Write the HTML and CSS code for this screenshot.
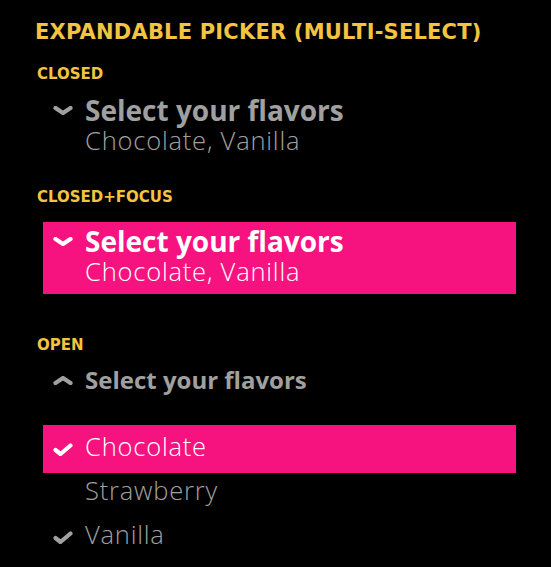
FILE: index.html
```html
<!DOCTYPE html>
<html>
<head>
<meta charset="utf-8">
<link rel="stylesheet" href="styles.css">
</head>
<body>
<main class="page">
  <h1 class="title">EXPANDABLE PICKER (MULTI-SELECT)</h1>

  <section class="state state-closed">
    <h2 class="label">CLOSED</h2>
    <div class="picker">
      <div class="picker-head">
        <svg class="chev" viewBox="0 0 20 9" aria-hidden="true"><path d="M2.5 2 L10 7 L17.5 2"/></svg>
        <span class="picker-title">Select your flavors</span>
      </div>
      <div class="picker-sub">Chocolate, Vanilla</div>
    </div>
  </section>

  <section class="state state-focus">
    <h2 class="label">CLOSED+FOCUS</h2>
    <div class="picker picker-focus">
      <div class="picker-head">
        <svg class="chev" viewBox="0 0 20 9" aria-hidden="true"><path d="M2.5 2 L10 7 L17.5 2"/></svg>
        <span class="picker-title">Select your flavors</span>
      </div>
      <div class="picker-sub">Chocolate, Vanilla</div>
    </div>
  </section>

  <section class="state state-open">
    <h2 class="label">OPEN</h2>
    <div class="picker picker-open">
      <div class="picker-head open-head">
        <svg class="chev chev-up" viewBox="0 0 20 9" aria-hidden="true"><path d="M2.5 7 L10 2 L17.5 7"/></svg>
        <span class="picker-title">Select your flavors</span>
      </div>
      <ul class="options">
        <li class="option option-focus">
          <svg class="check" viewBox="0 0 20 13" aria-hidden="true"><path d="M2.5 7 L7.5 11 L17.5 2.5"/></svg>
          <span>Chocolate</span>
        </li>
        <li class="option">
          <span class="check-space"></span>
          <span>Strawberry</span>
        </li>
        <li class="option">
          <svg class="check" viewBox="0 0 20 13" aria-hidden="true"><path d="M2.5 7 L7.5 11 L17.5 2.5"/></svg>
          <span>Vanilla</span>
        </li>
      </ul>
    </div>
  </section>
</main>
</body>
</html>
```

FILE: styles.css
```css
* { box-sizing: border-box; }
html, body { margin: 0; padding: 0; background: #000; }
body { width: 551px; height: 567px; overflow: hidden; }

.page { padding-top: 19px; }

.title {
  margin: 0 0 0 35px;
  font-family: "DejaVu Sans", sans-serif;
  font-weight: bold;
  font-size: 21px;
  line-height: 26px;
  color: #f2c43f;
  letter-spacing: 0.2px;
}

.label {
  margin: 0 0 0 37px;
  font-family: "DejaVu Sans", sans-serif;
  font-weight: bold;
  font-size: 15px;
  line-height: 18px;
  color: #f2c43f;
}

.state-closed { margin-top: 20px; }
.state-focus { margin-top: 33px; }
.state-open { margin-top: 42px; }

.picker {
  margin-left: 43px;
  width: 473px;
  color: #a0a0a0;
  font-family: "Open Sans", Lato, sans-serif;
}

.state-closed .picker { margin-top: 12px; padding: 0; }
.picker-focus { margin-top: 16px; background: #f7137f; color: #fff; height: 72px; padding-top: 4px; }

.picker-head {
  display: flex;
  align-items: center;
  padding-left: 10px;
  height: 30px;
}

.chev {
  width: 20px;
  height: 9px;
  margin-right: 12px;
  flex: none;
}
.chev path, .check path {
  fill: none;
  stroke: currentColor;
  stroke-width: 4.2;
  stroke-linecap: round;
  stroke-linejoin: round;
}

.picker-title {
  font-weight: 700;
  font-size: 28px;
  line-height: 30px;
}

.picker-sub {
  padding-left: 42px;
  font-weight: 300;
  font-size: 25.5px;
  line-height: 30px;
  letter-spacing: 0.8px;
}

.picker-open { margin-top: 11px; }
.open-head .picker-title { font-size: 24px; }

.options {
  list-style: none;
  margin: 30px 0 0 0;
  padding: 0;
}

.option {
  display: flex;
  align-items: center;
  height: 44px;
  padding: 0 0 6px 10px;
  font-weight: 300;
  font-size: 25.5px;
  line-height: 30px;
  letter-spacing: 0.8px;
}
.option-focus {
  height: 48px;
  margin-bottom: -2px;
  background: #f7137f;
  color: #fff;
}

.check {
  width: 20px;
  height: 13px;
  margin: 6px 12px 0 0;
  flex: none;
}
.check-space { width: 32px; flex: none; }
```
